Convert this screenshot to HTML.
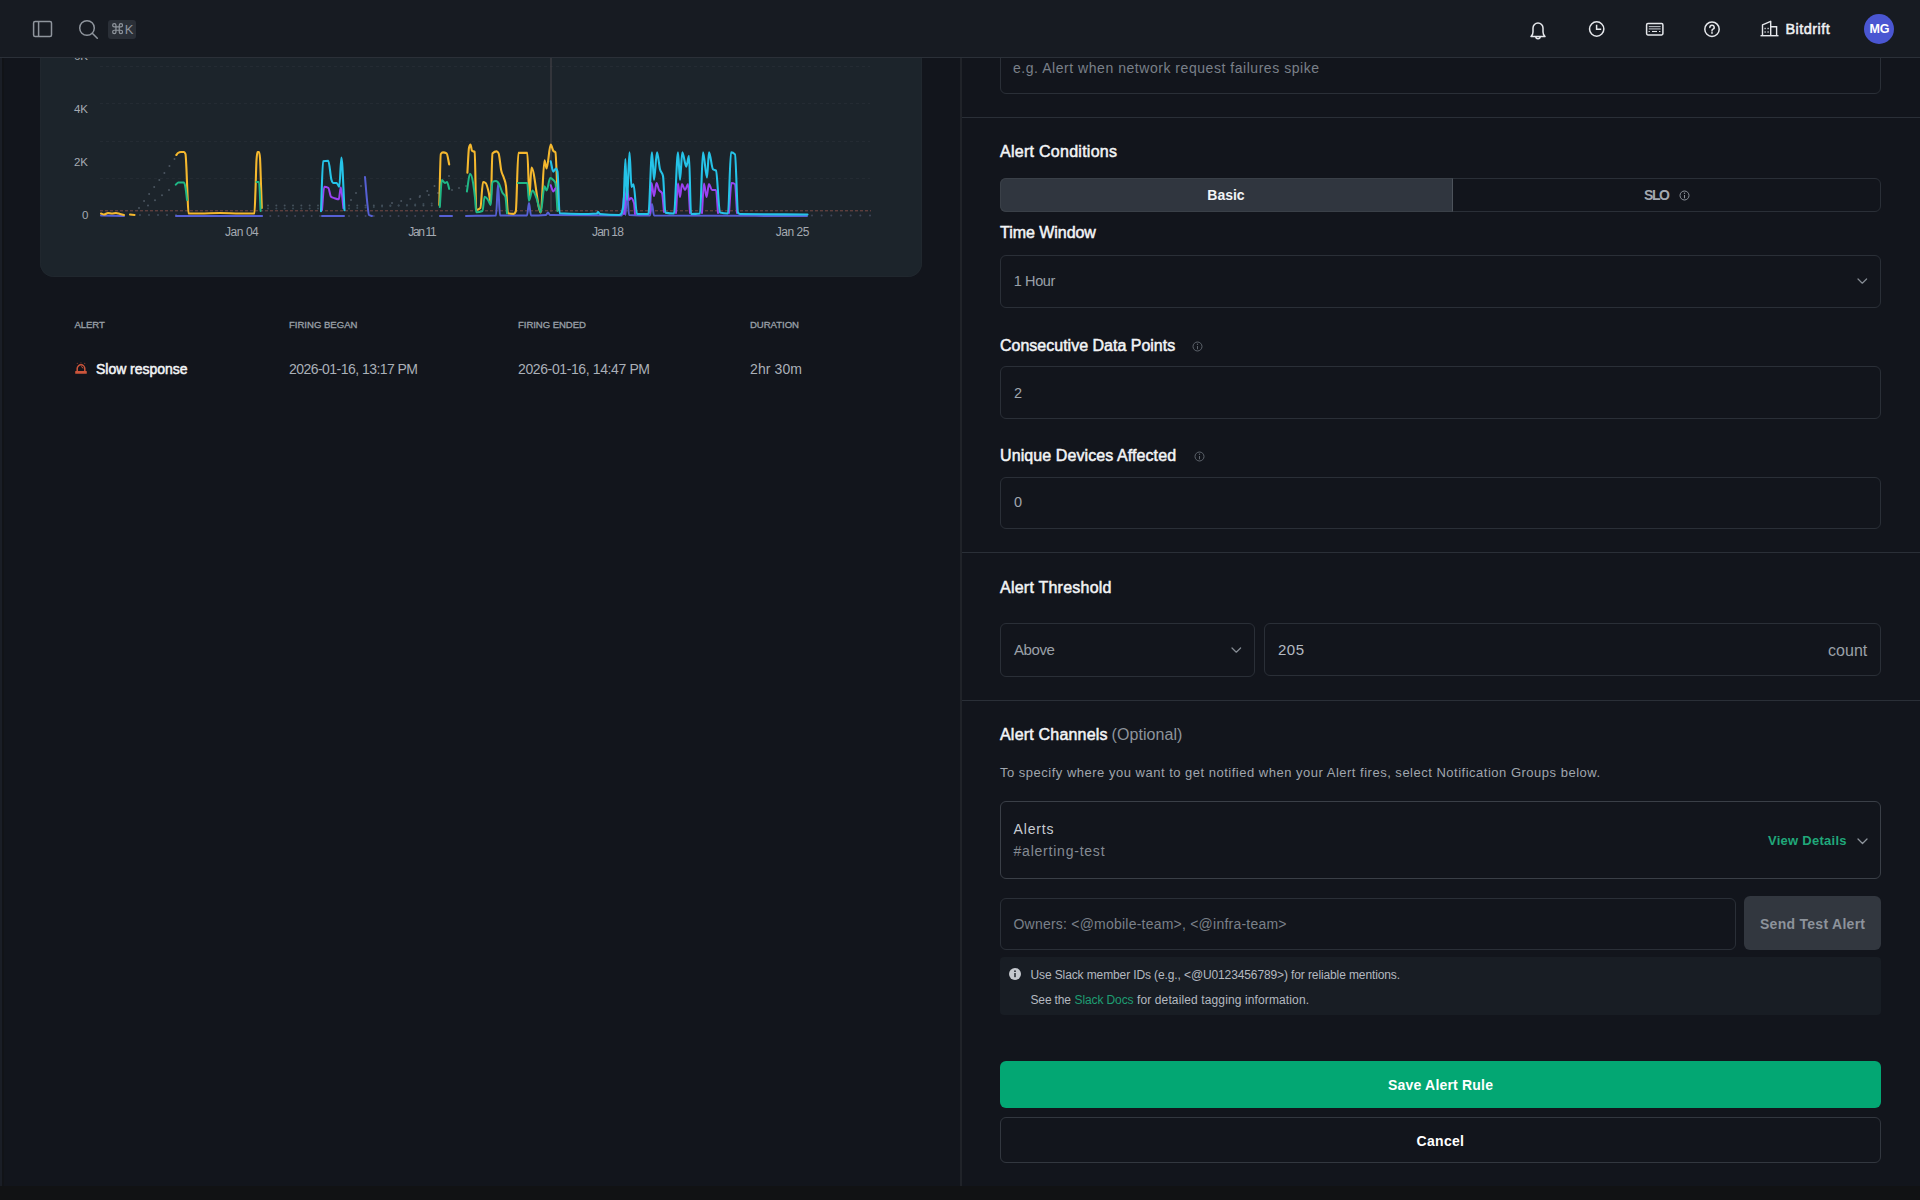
<!DOCTYPE html>
<html><head><meta charset="utf-8"><style>
html,body{margin:0;padding:0;width:1920px;height:1200px;overflow:hidden;background:#12151c}
body{position:relative;font-family:"Liberation Sans",sans-serif}
.b{position:absolute;box-sizing:content-box}
svg.b{overflow:visible}
.t{position:absolute;white-space:nowrap;line-height:1;font-family:"Liberation Sans",sans-serif}
</style></head><body>
<div class="b" style="left:0px;top:0px;width:961px;height:1186px;background:#12151c"></div>
<div class="b" style="left:40px;top:20px;width:882px;height:257px;background:#1c242b;border-radius:14px;box-shadow:inset 0 0 0 1px #20272e"></div>
<svg class="b" style="left:0;top:0" width="961" height="290" viewBox="0 0 961 290"><line x1="100" y1="66.5" x2="870" y2="66.5" stroke="#242b33" stroke-width="1" stroke-dasharray="3,3"/><line x1="100" y1="103.5" x2="870" y2="103.5" stroke="#242b33" stroke-width="1" stroke-dasharray="3,3"/><line x1="100" y1="141.5" x2="870" y2="141.5" stroke="#242b33" stroke-width="1" stroke-dasharray="3,3"/><line x1="100" y1="178.5" x2="870" y2="178.5" stroke="#242b33" stroke-width="1" stroke-dasharray="3,3"/><line x1="551" y1="57" x2="551" y2="212" stroke="#4a464c" stroke-width="1"/><circle cx="139.00" cy="208.00" r="1.0" fill="#4a5560"/><circle cx="144.07" cy="201.00" r="1.0" fill="#4a5560"/><circle cx="149.14" cy="194.00" r="1.0" fill="#4a5560"/><circle cx="154.21" cy="187.00" r="1.0" fill="#4a5560"/><circle cx="159.29" cy="180.00" r="1.0" fill="#4a5560"/><circle cx="164.36" cy="173.00" r="1.0" fill="#4a5560"/><circle cx="169.43" cy="166.00" r="1.0" fill="#4a5560"/><circle cx="174.50" cy="159.00" r="1.0" fill="#4a5560"/><circle cx="148.00" cy="205.50" r="1.0" fill="#4a5560"/><circle cx="155.00" cy="200.33" r="1.0" fill="#4a5560"/><circle cx="162.00" cy="195.17" r="1.0" fill="#4a5560"/><circle cx="169.00" cy="190.00" r="1.0" fill="#4a5560"/><circle cx="140.00" cy="215.00" r="1.0" fill="#3e4a58"/><circle cx="149.00" cy="215.00" r="1.0" fill="#3e4a58"/><circle cx="158.00" cy="215.00" r="1.0" fill="#3e4a58"/><circle cx="167.00" cy="215.00" r="1.0" fill="#3e4a58"/><circle cx="176.00" cy="215.00" r="1.0" fill="#3e4a58"/><circle cx="268.00" cy="205.50" r="1.0" fill="#46525c"/><circle cx="276.33" cy="205.50" r="1.0" fill="#46525c"/><circle cx="284.67" cy="205.50" r="1.0" fill="#46525c"/><circle cx="293.00" cy="205.50" r="1.0" fill="#46525c"/><circle cx="301.33" cy="205.50" r="1.0" fill="#46525c"/><circle cx="309.67" cy="205.50" r="1.0" fill="#46525c"/><circle cx="318.00" cy="205.50" r="1.0" fill="#46525c"/><circle cx="268.00" cy="208.60" r="1.0" fill="#3b4a55"/><circle cx="276.33" cy="208.60" r="1.0" fill="#3b4a55"/><circle cx="284.67" cy="208.60" r="1.0" fill="#3b4a55"/><circle cx="293.00" cy="208.60" r="1.0" fill="#3b4a55"/><circle cx="301.33" cy="208.60" r="1.0" fill="#3b4a55"/><circle cx="309.67" cy="208.60" r="1.0" fill="#3b4a55"/><circle cx="318.00" cy="208.60" r="1.0" fill="#3b4a55"/><circle cx="262.00" cy="216.00" r="1.0" fill="#3e4558"/><circle cx="270.29" cy="216.00" r="1.0" fill="#3e4558"/><circle cx="278.57" cy="216.00" r="1.0" fill="#3e4558"/><circle cx="286.86" cy="216.00" r="1.0" fill="#3e4558"/><circle cx="295.14" cy="216.00" r="1.0" fill="#3e4558"/><circle cx="303.43" cy="216.00" r="1.0" fill="#3e4558"/><circle cx="311.71" cy="216.00" r="1.0" fill="#3e4558"/><circle cx="320.00" cy="216.00" r="1.0" fill="#3e4558"/><circle cx="349.00" cy="205.50" r="1.0" fill="#46525c"/><circle cx="357.27" cy="205.50" r="1.0" fill="#46525c"/><circle cx="365.55" cy="205.50" r="1.0" fill="#46525c"/><circle cx="373.82" cy="205.50" r="1.0" fill="#46525c"/><circle cx="382.09" cy="205.50" r="1.0" fill="#46525c"/><circle cx="390.36" cy="205.50" r="1.0" fill="#46525c"/><circle cx="398.64" cy="205.50" r="1.0" fill="#46525c"/><circle cx="406.91" cy="205.50" r="1.0" fill="#46525c"/><circle cx="415.18" cy="205.50" r="1.0" fill="#46525c"/><circle cx="423.45" cy="205.50" r="1.0" fill="#46525c"/><circle cx="431.73" cy="205.50" r="1.0" fill="#46525c"/><circle cx="440.00" cy="205.50" r="1.0" fill="#46525c"/><circle cx="349.00" cy="208.60" r="1.0" fill="#3b4a55"/><circle cx="357.27" cy="208.09" r="1.0" fill="#3b4a55"/><circle cx="365.55" cy="207.58" r="1.0" fill="#3b4a55"/><circle cx="373.82" cy="207.07" r="1.0" fill="#3b4a55"/><circle cx="382.09" cy="206.56" r="1.0" fill="#3b4a55"/><circle cx="390.36" cy="206.05" r="1.0" fill="#3b4a55"/><circle cx="398.64" cy="205.55" r="1.0" fill="#3b4a55"/><circle cx="406.91" cy="205.04" r="1.0" fill="#3b4a55"/><circle cx="415.18" cy="204.53" r="1.0" fill="#3b4a55"/><circle cx="423.45" cy="204.02" r="1.0" fill="#3b4a55"/><circle cx="431.73" cy="203.51" r="1.0" fill="#3b4a55"/><circle cx="440.00" cy="203.00" r="1.0" fill="#3b4a55"/><circle cx="349.00" cy="216.00" r="1.0" fill="#3e4558"/><circle cx="357.27" cy="216.00" r="1.0" fill="#3e4558"/><circle cx="365.55" cy="216.00" r="1.0" fill="#3e4558"/><circle cx="373.82" cy="216.00" r="1.0" fill="#3e4558"/><circle cx="382.09" cy="216.00" r="1.0" fill="#3e4558"/><circle cx="390.36" cy="216.00" r="1.0" fill="#3e4558"/><circle cx="398.64" cy="216.00" r="1.0" fill="#3e4558"/><circle cx="406.91" cy="216.00" r="1.0" fill="#3e4558"/><circle cx="415.18" cy="216.00" r="1.0" fill="#3e4558"/><circle cx="423.45" cy="216.00" r="1.0" fill="#3e4558"/><circle cx="431.73" cy="216.00" r="1.0" fill="#3e4558"/><circle cx="440.00" cy="216.00" r="1.0" fill="#3e4558"/><circle cx="351.00" cy="200.00" r="1.0" fill="#4a5560"/><circle cx="356.00" cy="193.00" r="1.0" fill="#4a5560"/><circle cx="361.00" cy="186.00" r="1.0" fill="#4a5560"/><circle cx="392.00" cy="203.00" r="1.0" fill="#4a5560"/><circle cx="401.20" cy="201.00" r="1.0" fill="#4a5560"/><circle cx="410.40" cy="199.00" r="1.0" fill="#4a5560"/><circle cx="419.60" cy="197.00" r="1.0" fill="#4a5560"/><circle cx="428.80" cy="195.00" r="1.0" fill="#4a5560"/><circle cx="438.00" cy="193.00" r="1.0" fill="#4a5560"/><circle cx="420.00" cy="196.00" r="1.0" fill="#4a5560"/><circle cx="427.25" cy="191.00" r="1.0" fill="#4a5560"/><circle cx="434.50" cy="186.00" r="1.0" fill="#4a5560"/><circle cx="441.75" cy="181.00" r="1.0" fill="#4a5560"/><circle cx="449.00" cy="176.00" r="1.0" fill="#4a5560"/><circle cx="452.00" cy="190.00" r="1.0" fill="#46525c"/><circle cx="459.00" cy="188.00" r="1.0" fill="#46525c"/><circle cx="466.00" cy="186.00" r="1.0" fill="#46525c"/><circle cx="812.00" cy="215.50" r="1.0" fill="#3e4558"/><circle cx="821.67" cy="215.50" r="1.0" fill="#3e4558"/><circle cx="831.33" cy="215.50" r="1.0" fill="#3e4558"/><circle cx="841.00" cy="215.50" r="1.0" fill="#3e4558"/><circle cx="850.67" cy="215.50" r="1.0" fill="#3e4558"/><circle cx="860.33" cy="215.50" r="1.0" fill="#3e4558"/><circle cx="870.00" cy="215.50" r="1.0" fill="#3e4558"/><line x1="100" y1="210.8" x2="871" y2="210.8" stroke="#7a4a46" stroke-width="1.0" stroke-dasharray="3,2"/><polyline points="101,215.5 124,216" fill="none" stroke="#5660d4" stroke-width="2.0" stroke-linejoin="round" stroke-linecap="round" /><polyline points="176,216 262,216" fill="none" stroke="#5660d4" stroke-width="2.0" stroke-linejoin="round" stroke-linecap="round" /><polyline points="322,216 344,216" fill="none" stroke="#5660d4" stroke-width="2.0" stroke-linejoin="round" stroke-linecap="round" /><path d="M365.00,177.00 C365.83,186.33 366.67,198.03 367.50,205.00 C368.00,209.18 368.50,214.67 369.00,215.00 C370.00,215.67 371.00,215.67 372.00,216.00" fill="none" stroke="#5660d4" stroke-width="2.0" stroke-linejoin="round" stroke-linecap="round"/><polyline points="440,216 452,216" fill="none" stroke="#5660d4" stroke-width="2.0" stroke-linejoin="round" stroke-linecap="round" /><path d="M466.00,216.00 C476.00,215.83 486.00,215.83 496.00,215.50 C496.67,215.48 497.33,184.00 498.00,184.00 C498.67,184.00 499.33,215.50 500.00,215.50 C509.00,215.50 518.00,215.50 527.00,215.50 C527.67,215.50 528.33,203.00 529.00,203.00 C529.67,203.00 530.33,215.50 531.00,215.50 C536.00,215.50 541.00,215.33 546.00,215.00 C546.67,214.96 547.33,212.50 548.00,212.50 C548.67,212.50 549.33,214.99 550.00,215.00 C574.00,215.33 598.00,215.50 622.00,215.50 C622.67,215.50 623.33,196.00 624.00,196.00 C624.50,196.00 625.00,215.00 625.50,215.00 C626.00,215.00 626.50,190.00 627.00,190.00 C627.67,190.00 628.33,214.97 629.00,215.00 C636.00,215.33 643.00,215.50 650.00,215.50 C650.67,215.50 651.33,204.00 652.00,204.00 C652.67,204.00 653.33,215.50 654.00,215.50 C705.00,215.83 756.00,215.83 807.00,216.00" fill="none" stroke="#5660d4" stroke-width="2.0" stroke-linejoin="round" stroke-linecap="round"/><path d="M101.00,213.50 C102.00,213.83 103.00,214.50 104.00,214.50 C105.33,214.50 106.67,213.00 108.00,213.00 C109.33,213.00 110.67,213.50 112.00,213.50 C113.33,213.50 114.67,213.00 116.00,213.00 C117.33,213.00 118.67,213.67 120.00,214.00 C121.33,214.33 122.67,214.67 124.00,215.00" fill="none" stroke="#f5b82e" stroke-width="2.1" stroke-linejoin="round" stroke-linecap="round"/><polyline points="130,214.5 134.5,215" fill="none" stroke="#f5b82e" stroke-width="2.1" stroke-linejoin="round" stroke-linecap="round" /><path d="M176.30,155.00 C176.87,154.33 177.43,153.38 178.00,153.00 C179.00,152.33 180.00,152.00 181.00,152.00 C182.00,152.00 183.00,152.00 184.00,152.00 C184.50,152.00 185.00,152.67 185.50,154.00 C185.83,154.89 186.17,163.17 186.50,170.00 C186.83,176.83 187.17,187.75 187.50,195.00 C187.83,202.25 188.17,213.50 188.50,213.50 C192.33,213.50 196.17,213.50 200.00,213.50 C206.67,213.50 213.33,213.00 220.00,213.00 C226.67,213.00 233.33,213.50 240.00,213.50 C244.80,213.50 249.60,213.50 254.40,213.50 C254.77,213.50 255.13,199.49 255.50,190.00 C255.83,181.37 256.17,165.33 256.50,160.00 C256.83,154.67 257.17,152.00 257.50,152.00 C258.00,152.00 258.50,152.00 259.00,152.00 C259.33,152.00 259.67,154.00 260.00,158.00 C260.33,162.00 260.67,175.68 261.00,185.00 C261.27,192.46 261.53,200.33 261.80,208.00" fill="none" stroke="#f5b82e" stroke-width="2.1" stroke-linejoin="round" stroke-linecap="round"/><path d="M439.30,205.00 C439.80,188.00 440.30,154.73 440.80,154.00 C441.53,152.93 442.27,152.40 443.00,152.40 C444.20,152.40 445.40,152.73 446.60,153.40 C447.47,153.88 448.33,160.73 449.20,164.40" fill="none" stroke="#f5b82e" stroke-width="2.1" stroke-linejoin="round" stroke-linecap="round"/><path d="M467.40,172.70 C467.93,164.37 468.47,149.90 469.00,147.70 C469.50,145.63 470.00,144.60 470.50,144.60 C471.00,144.60 471.50,150.39 472.00,150.80 C472.90,151.53 473.80,151.17 474.70,151.90 C475.22,152.32 475.73,210.00 476.25,210.00 C477.63,210.00 479.02,209.33 480.40,208.00 C481.27,207.16 482.13,182.00 483.00,182.00 C483.87,182.00 484.73,182.33 485.60,183.00 C486.65,183.81 487.70,187.99 488.75,192.50 C489.43,195.43 490.12,203.00 490.80,203.00 C491.33,203.00 491.87,153.91 492.40,153.40 C493.80,152.07 495.20,151.40 496.60,151.40 C497.27,151.40 497.93,152.07 498.60,153.40 C499.48,155.17 500.37,166.50 501.25,170.60 C502.13,174.70 503.02,174.97 503.90,178.00 C504.60,180.40 505.30,180.75 506.00,186.25 C506.67,191.49 507.33,213.16 508.00,213.30 C509.92,213.70 511.83,213.90 513.75,213.90 C514.43,213.90 515.12,213.02 515.80,211.25 C516.67,209.01 517.53,152.90 518.40,152.90 C521.37,152.90 524.33,152.90 527.30,152.90 C528.00,152.90 528.70,196.70 529.40,196.70 C530.10,196.70 530.80,167.50 531.50,167.50 C534.60,167.50 537.70,212.50 540.80,212.50 C542.03,212.50 543.27,160.20 544.50,160.20 C545.20,160.20 545.90,168.50 546.60,168.50 C547.97,168.50 549.33,144.60 550.70,144.60 C551.57,144.60 552.43,149.51 553.30,150.80 C554.00,151.84 554.70,151.33 555.40,152.40 C556.27,153.72 557.13,190.80 558.00,210.00" fill="none" stroke="#f5b82e" stroke-width="2.1" stroke-linejoin="round" stroke-linecap="round"/><path d="M175.70,184.70 C176.57,184.00 177.43,182.60 178.30,182.60 C180.20,182.60 182.10,182.60 184.00,182.60 C184.53,182.60 185.07,185.04 185.60,188.30 C186.07,191.16 186.53,196.10 187.00,200.00" fill="none" stroke="#1fb886" stroke-width="2.0" stroke-linejoin="round" stroke-linecap="round"/><path d="M256.50,182.00 C257.33,182.00 258.17,182.00 259.00,182.00 C259.53,182.00 260.07,201.33 260.60,211.00" fill="none" stroke="#1fb886" stroke-width="2.0" stroke-linejoin="round" stroke-linecap="round"/><path d="M439.80,207.00 C440.50,198.00 441.20,180.00 441.90,180.00 C442.93,180.00 443.97,183.00 445.00,183.00 C445.67,183.00 446.33,182.00 447.00,182.00 C447.73,182.00 448.47,186.60 449.20,188.90" fill="none" stroke="#1fb886" stroke-width="2.0" stroke-linejoin="round" stroke-linecap="round"/><path d="M466.90,191.50 C467.93,185.58 468.97,173.75 470.00,173.75 C471.03,173.75 472.07,176.83 473.10,183.00 C473.73,186.78 474.37,191.65 475.00,198.00 C475.42,202.18 475.83,212.30 476.25,212.30 C478.33,212.30 480.42,211.87 482.50,211.00 C483.20,210.71 483.90,196.70 484.60,196.70 C485.63,196.70 486.67,197.92 487.70,199.30 C488.73,200.68 489.77,205.00 490.80,205.00 C491.33,205.00 491.87,182.30 492.40,182.00 C493.60,181.33 494.80,181.00 496.00,181.00 C497.07,181.00 498.13,182.22 499.20,184.20 C500.23,186.11 501.27,190.42 502.30,192.50 C503.33,194.58 504.37,193.90 505.40,196.70 C505.93,198.15 506.47,207.77 507.00,213.30" fill="none" stroke="#1fb886" stroke-width="2.0" stroke-linejoin="round" stroke-linecap="round"/><path d="M517.90,183.00 C521.03,183.00 524.17,183.00 527.30,183.00 C527.83,183.00 528.37,200.80 528.90,200.80 C530.10,200.80 531.30,190.40 532.50,190.40 C533.90,190.40 535.30,195.03 536.70,198.75 C538.07,202.38 539.43,212.30 540.80,212.30 C542.03,212.30 543.27,186.25 544.50,186.25 C545.20,186.25 545.90,190.40 546.60,190.40 C547.80,190.40 549.00,178.00 550.20,178.00 C551.23,178.00 552.27,178.85 553.30,180.00 C554.00,180.78 554.70,181.00 555.40,183.00 C556.10,185.00 556.80,201.67 557.50,211.00" fill="none" stroke="#1fb886" stroke-width="2.0" stroke-linejoin="round" stroke-linecap="round"/><path d="M322.00,210.00 C322.73,202.27 323.47,186.80 324.20,186.80 C325.57,186.80 326.93,187.13 328.30,187.80 C329.20,188.24 330.10,195.95 331.00,196.70 C332.20,197.70 333.40,197.78 334.60,198.20 C335.98,198.68 337.37,199.30 338.75,199.30 C339.43,199.30 340.12,187.30 340.80,187.30 C341.67,187.30 342.53,201.10 343.40,208.00" fill="none" stroke="#9b42f2" stroke-width="2.0" stroke-linejoin="round" stroke-linecap="round"/><path d="M550.70,185.20 C551.57,187.30 552.43,191.50 553.30,191.50 C554.00,191.50 554.70,189.37 555.40,188.30" fill="none" stroke="#9b42f2" stroke-width="2.0" stroke-linejoin="round" stroke-linecap="round"/><path d="M624.00,214.00 C625.00,205.33 626.00,188.00 627.00,188.00 C627.67,188.00 628.33,200.00 629.00,200.00 C629.67,200.00 630.33,198.00 631.00,198.00 C632.00,198.00 633.00,199.67 634.00,203.00 C634.33,204.11 634.67,210.33 635.00,214.00" fill="none" stroke="#9b42f2" stroke-width="2.0" stroke-linejoin="round" stroke-linecap="round"/><path d="M650.00,213.00 C650.50,203.00 651.00,183.00 651.50,183.00 C652.33,183.00 653.17,196.00 654.00,196.00 C654.83,196.00 655.67,183.00 656.50,183.00 C657.33,183.00 658.17,188.35 659.00,190.00 C660.00,191.98 661.00,191.00 662.00,193.00 C662.67,194.33 663.33,205.67 664.00,212.00" fill="none" stroke="#9b42f2" stroke-width="2.0" stroke-linejoin="round" stroke-linecap="round"/><path d="M676.00,213.00 C676.67,203.17 677.33,183.50 678.00,183.50 C678.67,183.50 679.33,197.00 680.00,197.00 C680.67,197.00 681.33,184.00 682.00,184.00 C683.00,184.00 684.00,190.00 685.00,190.00 C686.00,190.00 687.00,184.00 688.00,184.00 C688.67,184.00 689.33,203.33 690.00,213.00" fill="none" stroke="#9b42f2" stroke-width="2.0" stroke-linejoin="round" stroke-linecap="round"/><path d="M702.00,213.00 C702.67,203.17 703.33,183.50 704.00,183.50 C704.83,183.50 705.67,197.00 706.50,197.00 C707.33,197.00 708.17,184.00 709.00,184.00 C710.00,184.00 711.00,190.00 712.00,190.00 C713.33,190.00 714.67,190.00 716.00,190.00 C716.67,190.00 717.33,205.33 718.00,213.00" fill="none" stroke="#9b42f2" stroke-width="2.0" stroke-linejoin="round" stroke-linecap="round"/><path d="M729.00,213.00 C729.83,203.00 730.67,183.00 731.50,183.00 C732.67,183.00 733.83,183.33 735.00,184.00 C735.67,184.38 736.33,203.33 737.00,213.00" fill="none" stroke="#9b42f2" stroke-width="2.0" stroke-linejoin="round" stroke-linecap="round"/><path d="M321.00,211.25 C321.70,194.58 322.40,161.40 323.10,161.25 C324.83,160.88 326.57,160.70 328.30,160.70 C329.37,160.70 330.43,176.80 331.50,180.00 C332.17,182.00 332.83,183.00 333.50,183.00 C334.57,183.00 335.63,183.00 336.70,183.00 C337.57,183.00 338.43,186.80 339.30,186.80 C340.00,186.80 340.70,157.60 341.40,157.60 C342.43,157.60 343.47,192.67 344.50,210.20" fill="none" stroke="#25c3e8" stroke-width="2.1" stroke-linejoin="round" stroke-linecap="round"/><path d="M550.70,161.25 C551.57,164.73 552.43,171.70 553.30,171.70 C554.20,171.70 555.10,168.50 556.00,168.50 C556.50,168.50 557.00,169.57 557.50,171.70 C558.20,174.69 558.90,213.25 559.60,213.30 C566.40,213.77 573.20,214.00 580.00,214.00 C585.67,214.00 591.33,213.83 597.00,213.50 C597.33,213.48 597.67,212.00 598.00,212.00 C598.67,212.00 599.33,213.93 600.00,214.00 C606.33,214.67 612.67,215.00 619.00,215.00 C619.67,215.00 620.33,214.67 621.00,214.00 C621.83,213.17 622.67,211.00 623.50,205.00 C624.13,200.44 624.77,159.00 625.40,159.00 C625.93,159.00 626.47,200.00 627.00,200.00 C627.83,200.00 628.67,152.30 629.50,152.30 C630.17,152.30 630.83,187.00 631.50,187.00 C632.17,187.00 632.83,184.20 633.50,184.20 C634.67,184.20 635.83,214.00 637.00,214.00 C640.80,214.00 644.60,214.00 648.40,214.00 C649.60,214.00 650.80,152.30 652.00,152.30 C652.67,152.30 653.33,180.00 654.00,180.00 C655.00,180.00 656.00,152.30 657.00,152.30 C658.00,152.30 659.00,165.35 660.00,169.30 C661.00,173.25 662.00,171.53 663.00,176.00 C663.80,179.57 664.60,212.43 665.40,212.60 C668.27,213.20 671.13,213.50 674.00,213.50 C675.33,213.50 676.67,152.30 678.00,152.30 C678.67,152.30 679.33,180.00 680.00,180.00 C680.77,180.00 681.53,152.30 682.30,152.30 C683.63,152.30 684.97,166.60 686.30,166.60 C687.20,166.60 688.10,155.70 689.00,155.70 C689.67,155.70 690.33,214.00 691.00,214.00 C694.00,214.00 697.00,213.83 700.00,213.50 C701.00,213.39 702.00,152.30 703.00,152.30 C704.33,152.30 705.67,177.40 707.00,177.40 C707.67,177.40 708.33,152.30 709.00,152.30 C710.33,152.30 711.67,168.14 713.00,169.30 C714.00,170.17 715.00,169.73 716.00,170.60 C717.33,171.76 718.67,212.30 720.00,212.60 C722.67,213.20 725.33,213.50 728.00,213.50 C729.00,213.50 730.00,152.30 731.00,152.30 C732.33,152.30 733.67,153.00 735.00,154.40 C736.00,155.45 737.00,211.20 738.00,212.60 C738.67,213.53 739.33,213.99 740.00,214.00 C762.50,214.33 785.00,214.33 807.50,214.50" fill="none" stroke="#25c3e8" stroke-width="2.1" stroke-linejoin="round" stroke-linecap="round"/></svg><div class="t" style="left:74.00px;top:51.23px;font-size:11.5px;font-weight:400;color:#a4aab2;letter-spacing:-0.100px;">6K</div>
<div class="t" style="left:74.00px;top:103.82px;font-size:11.5px;font-weight:400;color:#a4aab2;letter-spacing:-0.100px;">4K</div>
<div class="t" style="left:74.00px;top:156.82px;font-size:11.5px;font-weight:400;color:#a4aab2;letter-spacing:-0.100px;">2K</div>
<div class="t" style="left:82.00px;top:209.72px;font-size:11.5px;font-weight:400;color:#a4aab2;">0</div>
<div class="t" style="left:225.00px;top:226.40px;font-size:12px;font-weight:400;color:#a4aab2;letter-spacing:-0.450px;">Jan 04</div>
<div class="t" style="left:408.30px;top:226.40px;font-size:12px;font-weight:400;color:#a4aab2;letter-spacing:-1.340px;">Jan 11</div>
<div class="t" style="left:592.00px;top:226.40px;font-size:12px;font-weight:400;color:#a4aab2;letter-spacing:-0.840px;">Jan 18</div>
<div class="t" style="left:775.80px;top:226.40px;font-size:12px;font-weight:400;color:#a4aab2;letter-spacing:-0.480px;">Jan 25</div>
<div class="t" style="left:74.60px;top:319.94px;font-size:9.6px;font-weight:400;color:#9aa0a8;-webkit-text-stroke:0.3px #9aa0a8;letter-spacing:-0.150px;">ALERT</div>
<div class="t" style="left:289.00px;top:319.94px;font-size:9.6px;font-weight:400;color:#9aa0a8;-webkit-text-stroke:0.3px #9aa0a8;letter-spacing:-0.027px;">FIRING BEGAN</div>
<div class="t" style="left:518.00px;top:319.94px;font-size:9.6px;font-weight:400;color:#9aa0a8;-webkit-text-stroke:0.3px #9aa0a8;letter-spacing:-0.073px;">FIRING ENDED</div>
<div class="t" style="left:750.00px;top:319.94px;font-size:9.6px;font-weight:400;color:#9aa0a8;-webkit-text-stroke:0.3px #9aa0a8;letter-spacing:-0.057px;">DURATION</div>
<svg class="b" style="left:73px;top:360px" width="16" height="16" viewBox="0 0 16 16"><path d="M4.2 11 V8.6 A3.8 3.8 0 0 1 11.8 8.6 V11" fill="none" stroke="#cc553b" stroke-width="1.5"/><rect x="2.2" y="10.9" width="11.6" height="2.9" rx="0.6" fill="#cc553b"/><path d="M8.2 6.6 A2 2 0 0 1 10 8.4" fill="none" stroke="#cc553b" stroke-width="1"/><g fill="#cc553b" opacity="0.55"><circle cx="4.3" cy="3.4" r="0.6"/><circle cx="8" cy="2.9" r="0.6"/><circle cx="11.7" cy="3.4" r="0.6"/></g></svg>
<div class="t" style="left:96.00px;top:362.10px;font-size:14px;font-weight:400;color:#f2f4f6;-webkit-text-stroke:0.5px #f2f4f6;letter-spacing:-0.025px;">Slow response</div>
<div class="t" style="left:289.00px;top:362.10px;font-size:14px;font-weight:400;color:#aab0b8;letter-spacing:-0.542px;">2026-01-16, 13:17 PM</div>
<div class="t" style="left:518.00px;top:362.10px;font-size:14px;font-weight:400;color:#aab0b8;letter-spacing:-0.384px;">2026-01-16, 14:47 PM</div>
<div class="t" style="left:750.00px;top:362.10px;font-size:14px;font-weight:400;color:#aab0b8;letter-spacing:0.100px;">2hr 30m</div>
<div class="b" style="left:0px;top:57px;width:2px;height:1129px;background:#1a1e26"></div>
<div class="b" style="left:2px;top:57px;width:2px;height:1129px;background:#111317"></div>
<div class="b" style="left:960px;top:57px;width:2px;height:1129px;background:#202329"></div>
<div class="b" style="left:962px;top:0px;width:958px;height:1186px;background:#12151c"></div>
<div class="b" style="left:1000px;top:20px;width:879px;height:72px;border:1px solid #2a2f37;border-radius:6px;"></div>
<div class="t" style="left:1013.00px;top:60.60px;font-size:14px;font-weight:400;color:#7a8089;letter-spacing:0.540px;">e.g. Alert when network request failures spike</div>
<div class="b" style="left:962px;top:117px;width:958px;height:1px;background:#2a2f37"></div>
<div class="t" style="left:1000.00px;top:143.60px;font-size:16px;font-weight:400;color:#f2f4f6;-webkit-text-stroke:0.5px #f2f4f6;letter-spacing:0.273px;">Alert Conditions</div>
<div class="b" style="left:1000px;top:178px;width:879px;height:32px;border:1px solid #2a2f37;border-radius:6px;"></div>
<div class="b" style="left:1000px;top:178px;width:453px;height:34px;background:#30363f;border-radius:6px 0 0 6px;border:1px solid #3a4048;border-right-color:#4d535b;box-sizing:border-box"></div>
<div class="t" style="left:1207.30px;top:188.00px;font-size:14px;font-weight:700;color:#f2f4f6;">Basic</div>
<div class="t" style="left:1644.00px;top:188.00px;font-size:14px;font-weight:700;color:#a3a9b1;letter-spacing:-1.400px;">SLO</div>
<svg class="b" style="left:1678.5px;top:189.5px" width="11.0" height="11.0" viewBox="0 0 11.0 11.0"><circle cx="5.5" cy="5.5" r="4.5" fill="none" stroke="#8a9098" stroke-width="1"/><line x1="5.5" y1="5.0" x2="5.5" y2="8.3" stroke="#8a9098" stroke-width="1"/><circle cx="5.5" cy="3.2" r="0.7" fill="#8a9098"/></svg>
<div class="t" style="left:1000.00px;top:225.20px;font-size:16px;font-weight:400;color:#f2f4f6;-webkit-text-stroke:0.5px #f2f4f6;letter-spacing:-0.040px;">Time Window</div>
<div class="b" style="left:1000px;top:255px;width:879px;height:51px;border:1px solid #2a2f37;border-radius:6px;"></div>
<div class="t" style="left:1013.75px;top:273.98px;font-size:14.5px;font-weight:400;color:#9aa0a8;letter-spacing:-0.390px;">1 Hour</div>
<svg class="b" style="left:1857.2px;top:278.2px" width="10.6" height="6.2" viewBox="0 0 10.6 6.2"><polyline points="1,1 5.3,5.2 9.6,1" fill="none" stroke="#858b93" stroke-width="1.25" stroke-linecap="round" stroke-linejoin="round"/></svg>
<div class="t" style="left:1000.00px;top:337.60px;font-size:16px;font-weight:400;color:#f2f4f6;-webkit-text-stroke:0.5px #f2f4f6;">Consecutive Data Points</div>
<svg class="b" style="left:1191.5px;top:340.5px" width="11.0" height="11.0" viewBox="0 0 11.0 11.0"><circle cx="5.5" cy="5.5" r="4.5" fill="none" stroke="#5d636b" stroke-width="1"/><line x1="5.5" y1="5.0" x2="5.5" y2="8.3" stroke="#5d636b" stroke-width="1"/><circle cx="5.5" cy="3.2" r="0.7" fill="#5d636b"/></svg>
<div class="b" style="left:1000px;top:366px;width:879px;height:51px;border:1px solid #2a2f37;border-radius:6px;"></div>
<div class="t" style="left:1014.00px;top:385.88px;font-size:14.5px;font-weight:400;color:#a0a6ae;">2</div>
<div class="t" style="left:1000.00px;top:447.60px;font-size:16px;font-weight:400;color:#f2f4f6;-webkit-text-stroke:0.5px #f2f4f6;letter-spacing:0.091px;">Unique Devices Affected</div>
<svg class="b" style="left:1193.5px;top:451.0px" width="11.0" height="11.0" viewBox="0 0 11.0 11.0"><circle cx="5.5" cy="5.5" r="4.5" fill="none" stroke="#5d636b" stroke-width="1"/><line x1="5.5" y1="5.0" x2="5.5" y2="8.3" stroke="#5d636b" stroke-width="1"/><circle cx="5.5" cy="3.2" r="0.7" fill="#5d636b"/></svg>
<div class="b" style="left:1000px;top:477px;width:879px;height:50px;border:1px solid #2a2f37;border-radius:6px;"></div>
<div class="t" style="left:1014.00px;top:495.48px;font-size:14.5px;font-weight:400;color:#a0a6ae;">0</div>
<div class="b" style="left:962px;top:552px;width:958px;height:1px;background:#2a2f37"></div>
<div class="t" style="left:1000.00px;top:580.40px;font-size:16px;font-weight:400;color:#f2f4f6;-webkit-text-stroke:0.5px #f2f4f6;letter-spacing:0.236px;">Alert Threshold</div>
<div class="b" style="left:1000px;top:623px;width:253px;height:52px;border:1px solid #2a2f37;border-radius:6px;"></div>
<div class="t" style="left:1014.00px;top:642.25px;font-size:15px;font-weight:400;color:#9aa0a8;letter-spacing:-0.425px;">Above</div>
<svg class="b" style="left:1230.9px;top:647.4px" width="10.6" height="6.2" viewBox="0 0 10.6 6.2"><polyline points="1,1 5.3,5.2 9.6,1" fill="none" stroke="#858b93" stroke-width="1.25" stroke-linecap="round" stroke-linejoin="round"/></svg>
<div class="b" style="left:1264px;top:623px;width:615px;height:51px;border:1px solid #2a2f37;border-radius:6px;"></div>
<div class="t" style="left:1278.00px;top:641.75px;font-size:15px;font-weight:400;color:#b4bac2;letter-spacing:0.500px;">205</div>
<div class="t" style="left:1828.00px;top:642.70px;font-size:16px;font-weight:400;color:#9aa0a8;letter-spacing:0.037px;">count</div>
<div class="b" style="left:962px;top:700px;width:958px;height:1px;background:#2a2f37"></div>
<div class="t" style="left:1000.00px;top:727.40px;font-size:16px;font-weight:400;color:#f2f4f6;-webkit-text-stroke:0.5px #f2f4f6;letter-spacing:0.200px;">Alert Channels</div>
<div class="t" style="left:1111.50px;top:727.40px;font-size:16px;font-weight:400;color:#8d939b;letter-spacing:0.078px;">(Optional)</div>
<div class="t" style="left:1000.00px;top:765.95px;font-size:13px;font-weight:400;color:#a0a6ae;letter-spacing:0.502px;">To specify where you want to get notified when your Alert fires, select Notification Groups below.</div>
<div class="b" style="left:1000px;top:801px;width:881px;height:78px;border:1px solid #3a3f47;border-radius:6px;box-sizing:border-box"></div>
<div class="t" style="left:1013.50px;top:822.10px;font-size:14px;font-weight:400;color:#c8ccd2;letter-spacing:0.840px;">Alerts</div>
<div class="t" style="left:1013.50px;top:844.10px;font-size:14px;font-weight:400;color:#858b93;letter-spacing:0.777px;">#alerting-test</div>
<div class="t" style="left:1768.00px;top:833.95px;font-size:13px;font-weight:700;color:#20a87a;letter-spacing:0.264px;">View Details</div>
<svg class="b" style="left:1857.0px;top:837.75px" width="11" height="6.5" viewBox="0 0 11 6.5"><polyline points="1,1 5.5,5.5 10,1" fill="none" stroke="#8f959d" stroke-width="1.3" stroke-linecap="round" stroke-linejoin="round"/></svg>
<div class="b" style="left:1000px;top:898px;width:734px;height:50px;border:1px solid #2a2f37;border-radius:6px;"></div>
<div class="t" style="left:1013.50px;top:917.10px;font-size:14px;font-weight:400;color:#7a8089;letter-spacing:0.222px;">Owners: &lt;@mobile-team&gt;, &lt;@infra-team&gt;</div>
<div class="b" style="left:1744px;top:896px;width:137px;height:54px;background:#32373f;border-radius:6px"></div>
<div class="t" style="left:1760.00px;top:917.10px;font-size:14px;font-weight:700;color:#8d939b;letter-spacing:0.279px;">Send Test Alert</div>
<div class="b" style="left:1000px;top:957px;width:881px;height:58px;background:#181d24;border-radius:4px"></div>
<svg class="b" style="left:1008px;top:967px" width="14" height="14" viewBox="0 0 14 14"><circle cx="7" cy="7" r="6" fill="#c4c8ce"/><rect x="6.3" y="6" width="1.4" height="4.2" fill="#181d24"/><circle cx="7" cy="4.2" r="0.85" fill="#181d24"/></svg>
<div class="t" style="left:1030.50px;top:968.80px;font-size:12px;font-weight:400;color:#b4b9c0;letter-spacing:-0.115px;">Use Slack member IDs (e.g., &lt;@U0123456789&gt;) for reliable mentions.</div>
<div class="t" style="left:1030.50px;top:993.80px;font-size:12px;font-weight:400;color:#b4b9c0;letter-spacing:-0.150px;">See the</div>
<div class="t" style="left:1074.50px;top:993.80px;font-size:12px;font-weight:400;color:#1e9e73;letter-spacing:-0.111px;">Slack Docs</div>
<div class="t" style="left:1137.00px;top:993.80px;font-size:12px;font-weight:400;color:#b4b9c0;letter-spacing:0.122px;">for detailed tagging information.</div>
<div class="b" style="left:1000px;top:1061px;width:881px;height:47px;background:#03a773;border-radius:6px"></div>
<div class="t" style="left:1388.00px;top:1078.10px;font-size:14px;font-weight:700;color:#ffffff;letter-spacing:0.200px;">Save Alert Rule</div>
<div class="b" style="left:1000px;top:1117px;width:881px;height:46px;border:1px solid #32373f;border-radius:6px;box-sizing:border-box"></div>
<div class="t" style="left:1416.50px;top:1133.60px;font-size:14px;font-weight:700;color:#ffffff;letter-spacing:0.320px;">Cancel</div>
<div class="b" style="left:0px;top:1186px;width:1920px;height:14px;background:#111214"></div>
<div class="b" style="left:0px;top:0px;width:1920px;height:57px;background:#171b22"></div>
<div class="b" style="left:0px;top:57px;width:1920px;height:1px;background:#2b3038"></div>
<svg class="b" style="left:32px;top:20px" width="22" height="18" viewBox="0 0 22 18"><rect x="1.6" y="1.6" width="17.9" height="15" rx="1.5" fill="none" stroke="#8f959d" stroke-width="1.5"/><line x1="6.6" y1="1.6" x2="6.6" y2="16.6" stroke="#8f959d" stroke-width="1.5"/></svg>
<svg class="b" style="left:77px;top:18px" width="24" height="24" viewBox="0 0 24 24"><circle cx="10" cy="10" r="7.3" fill="none" stroke="#8f959d" stroke-width="1.5"/><line x1="15.3" y1="15.3" x2="20.3" y2="20.3" stroke="#8f959d" stroke-width="1.5" stroke-linecap="round"/></svg>
<div class="b" style="left:108px;top:20px;width:28px;height:19px;background:#2a2f37;border-radius:3px"></div>
<svg class="b" style="left:111.35px;top:22.35px" width="14" height="14" viewBox="0 0 14 14"><g transform="scale(0.55)"><path d="M15 6v12a3 3 0 1 0 3-3H6a3 3 0 1 0 3 3V6a3 3 0 1 0-3 3h12a3 3 0 1 0-3-3" fill="none" stroke="#8f959d" stroke-width="2.2" stroke-linecap="round" stroke-linejoin="round"/></g></svg>
<div class="t" style="left:124.70px;top:22.95px;font-size:13px;font-weight:400;color:#8f959d;">K</div>
<svg class="b" style="left:1527px;top:20px" width="22" height="22" viewBox="0 0 22 22"><path d="M4 16.5 C5.6 15 6 14 6 12 V8 A5 5 0 0 1 16 8 V12 C16 14 16.4 15 18 16.5 Z" fill="none" stroke="#e5e7eb" stroke-width="1.5" stroke-linejoin="round"/><path d="M8.8 16.6 A2.2 2.2 0 0 0 13.2 16.6" fill="none" stroke="#e5e7eb" stroke-width="1.5"/></svg>
<svg class="b" style="left:1586px;top:19px" width="21" height="21" viewBox="0 0 21 21"><circle cx="10.7" cy="10" r="7.15" fill="none" stroke="#e5e7eb" stroke-width="1.5"/><polyline points="10.6,5.8 10.6,10.3 15.2,10.3" fill="none" stroke="#e5e7eb" stroke-width="1.5"/></svg>
<svg class="b" style="left:1644px;top:20px" width="21" height="17" viewBox="0 0 21 17"><rect x="2.6" y="3.6" width="16.3" height="11.3" rx="1.3" fill="none" stroke="#e5e7eb" stroke-width="1.5"/><line x1="4.8" y1="6.6" x2="16.6" y2="6.6" stroke="#b8bcc2" stroke-width="1.1"/><line x1="4.8" y1="8.9" x2="16.6" y2="8.9" stroke="#b8bcc2" stroke-width="1.1"/><g stroke="#e5e7eb" stroke-width="1.1"><line x1="4.6" y1="11.5" x2="5.8" y2="11.5"/><line x1="8" y1="11.5" x2="13" y2="11.5"/><line x1="15" y1="11.5" x2="16.4" y2="11.5"/></g></svg>
<svg class="b" style="left:1701px;top:19px" width="21" height="21" viewBox="0 0 21 21"><circle cx="11" cy="10.2" r="7.2" fill="none" stroke="#e5e7eb" stroke-width="1.5"/><path d="M8.9 8.4 A2.15 2.15 0 1 1 11.6 10.4 C11.1 10.7 11 11 11 11.9" fill="none" stroke="#e5e7eb" stroke-width="1.5" stroke-linecap="round"/><circle cx="11" cy="13.9" r="0.9" fill="#e5e7eb"/></svg>
<svg class="b" style="left:1759px;top:19px" width="21" height="20" viewBox="0 0 21 20"><path d="M1.5 16.7 H19.5" stroke="#e5e7eb" stroke-width="1.4"/><path d="M3.5 16.7 V5.8 L11.7 2.3 V16.7" fill="none" stroke="#e5e7eb" stroke-width="1.4" stroke-linejoin="round"/><path d="M11.7 7.75 H17.6 V16.7" fill="none" stroke="#e5e7eb" stroke-width="1.4"/><g fill="#e5e7eb"><rect x="5.5" y="8.8" width="1.2" height="1.4"/><rect x="8.5" y="8.8" width="1.2" height="1.4"/><rect x="5.5" y="12.3" width="1.2" height="1.4"/><rect x="8.5" y="12.3" width="1.2" height="1.4"/></g></svg>
<div class="t" style="left:1785.50px;top:21.57px;font-size:14.5px;font-weight:400;color:#eef0f3;-webkit-text-stroke:0.5px #eef0f3;letter-spacing:0.443px;">Bitdrift</div>
<div class="b" style="left:1863.8px;top:13.9px;width:30.4px;height:30.4px;border-radius:50%;background:#4a56d2"></div>
<div class="t" style="left:1869.50px;top:23.27px;font-size:12.5px;font-weight:700;color:#ffffff;letter-spacing:-0.100px;">MG</div>
</body></html>
